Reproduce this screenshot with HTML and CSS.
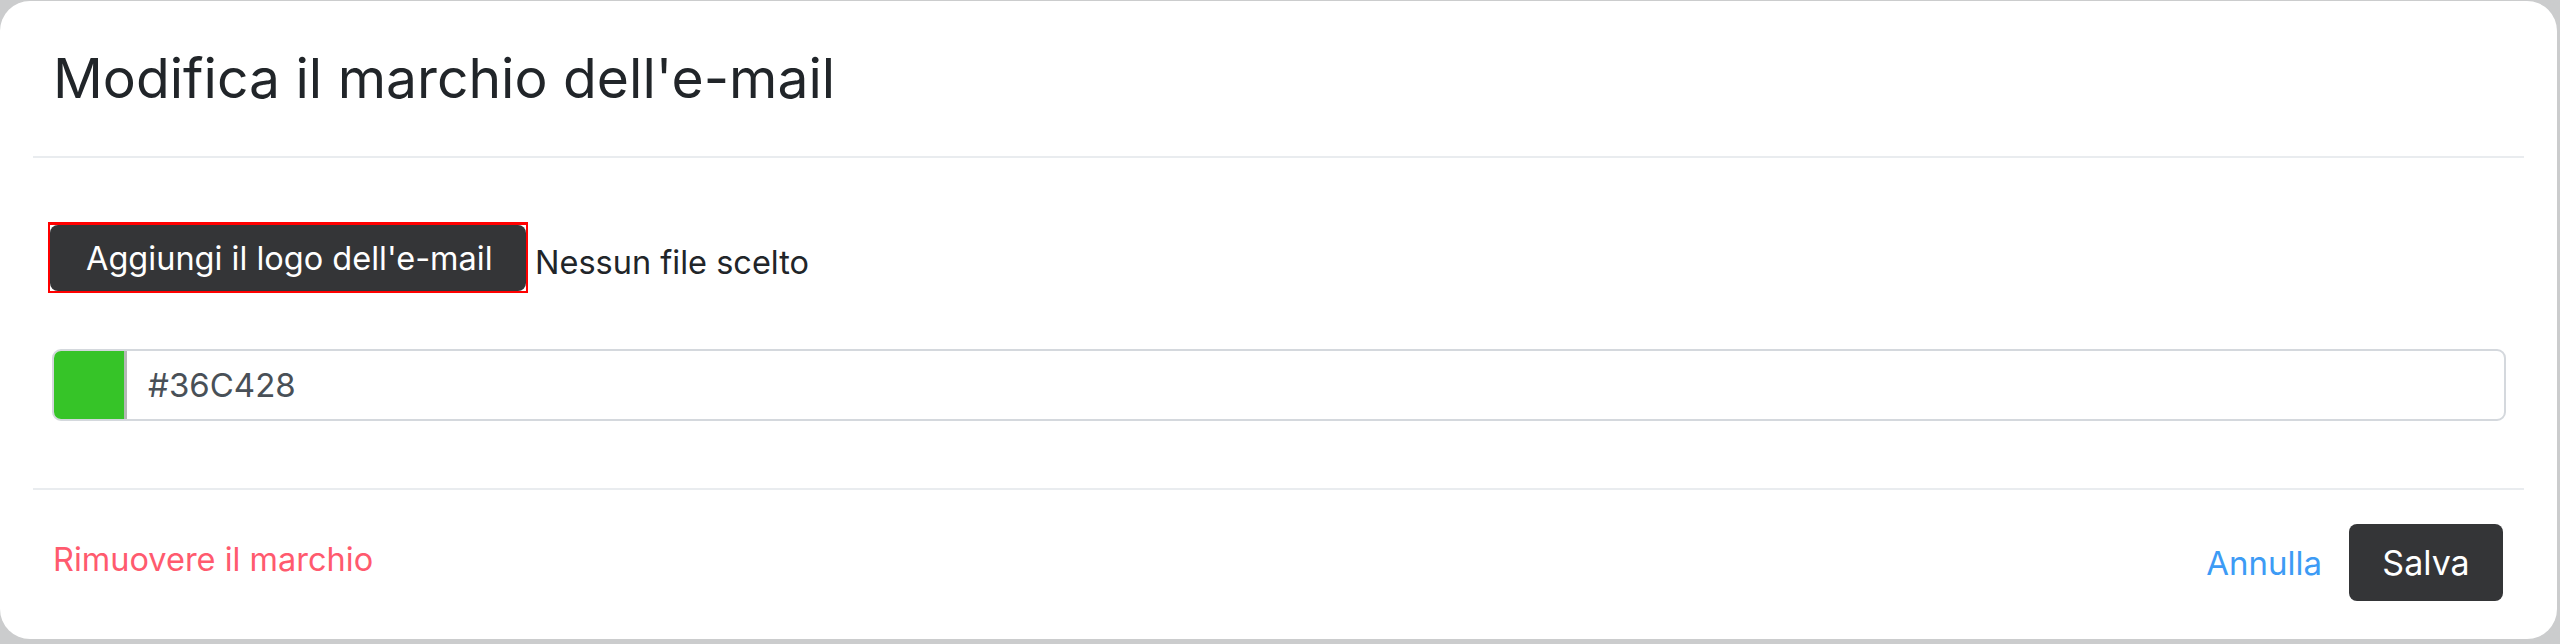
FILE: index.html
```html
<!DOCTYPE html>
<html lang="it">
<head>
<meta charset="utf-8">
<title>Modifica il marchio dell'e-mail</title>
<link rel="stylesheet" href="styles.css">
</head>
<body>
<div class="modal">
  <div class="modal-header">
    <h1 class="modal-title">Modifica il marchio dell'e-mail</h1>
  </div>
  <div class="modal-body">
    <div class="file-row">
      <span class="file-focus"><span class="file-btn">Aggiungi il logo dell'e-mail</span></span>
      <span class="file-name">Nessun file scelto</span>
    </div>
    <div class="color-input">
      <span class="swatch"></span>
      <span class="color-value">#36C428</span>
    </div>
  </div>
  <div class="modal-footer">
    <a class="remove-link">Rimuovere il marchio</a>
    <div class="actions">
      <a class="cancel-link">Annulla</a>
      <span class="save-btn">Salva</span>
    </div>
  </div>
</div>
</body>
</html>
```

FILE: styles.css
```css
html, body {
  margin: 0;
  padding: 0;
}
body {
  background: #cbcccd;
  font-family: Inter, "Noto Sans", sans-serif;
  color: #212529;
  width: 2560px;
  height: 644px;
  overflow: hidden;
}
.modal {
  box-sizing: border-box;
  margin-top: 1px;
  width: 2557px;
  height: 638px;
  background: #ffffff;
  border-radius: 30px;
  padding: 0 33px;
  display: flex;
  flex-direction: column;
}
.modal-header {
  height: 155px;
  border-bottom: 2px solid #e9ecef;
  display: flex;
  align-items: center;
  padding-left: 20px;
}
.modal-title {
  margin: 0;
  font-size: 55.2px;
  font-weight: 400;
  line-height: 1;
  color: #212529;
}
.modal-body {
  height: 332px;
  border-bottom: 2px solid #e9ecef;
  padding: 64px 18px 0 19px;
  box-sizing: border-box;
  display: flex;
  flex-direction: column;
  gap: 56px;
}
.file-row {
  display: flex;
  align-items: center;
  margin-left: -4px;
  height: 71px;
}
.file-focus {
  display: inline-flex;
  border: 2px solid #ff0000;
  border-top-width: 3px;
}
.file-btn {
  display: inline-flex;
  align-items: center;
  box-sizing: border-box;
  width: 476px;
  height: 66px;
  padding-left: 36px;
  background: #343537;
  color: #ffffff;
  border-radius: 8px;
  font-size: 32.5px;
}
.file-name {
  margin-left: 7px;
  margin-top: 10px;
  font-size: 32.5px;
  color: #212529;
}
.color-input {
  box-sizing: border-box;
  height: 72px;
  border: 2px solid #d4d8dd;
  border-radius: 9px;
  display: flex;
  align-items: stretch;
  overflow: hidden;
}
.swatch {
  width: 70px;
  background: #36c428;
  border-right: 3px solid #b5b8b6;
}
.color-value {
  display: flex;
  align-items: center;
  padding-left: 21px;
  font-size: 33px;
  color: #495057;
}
.modal-footer {
  flex: 1;
  display: flex;
  align-items: center;
  justify-content: space-between;
  padding: 0 21px 4px 20px;
}
.remove-link {
  color: #ff5a6e;
  font-size: 32.5px;
  margin-bottom: 6px;
}
.actions {
  display: flex;
  align-items: center;
  gap: 27px;
}
.cancel-link {
  color: #3d9bf5;
  font-size: 33px;
}
.save-btn {
  display: inline-flex;
  align-items: center;
  justify-content: center;
  width: 154px;
  height: 77px;
  background: #343537;
  color: #ffffff;
  border-radius: 8px;
  font-size: 34px;
}
```
